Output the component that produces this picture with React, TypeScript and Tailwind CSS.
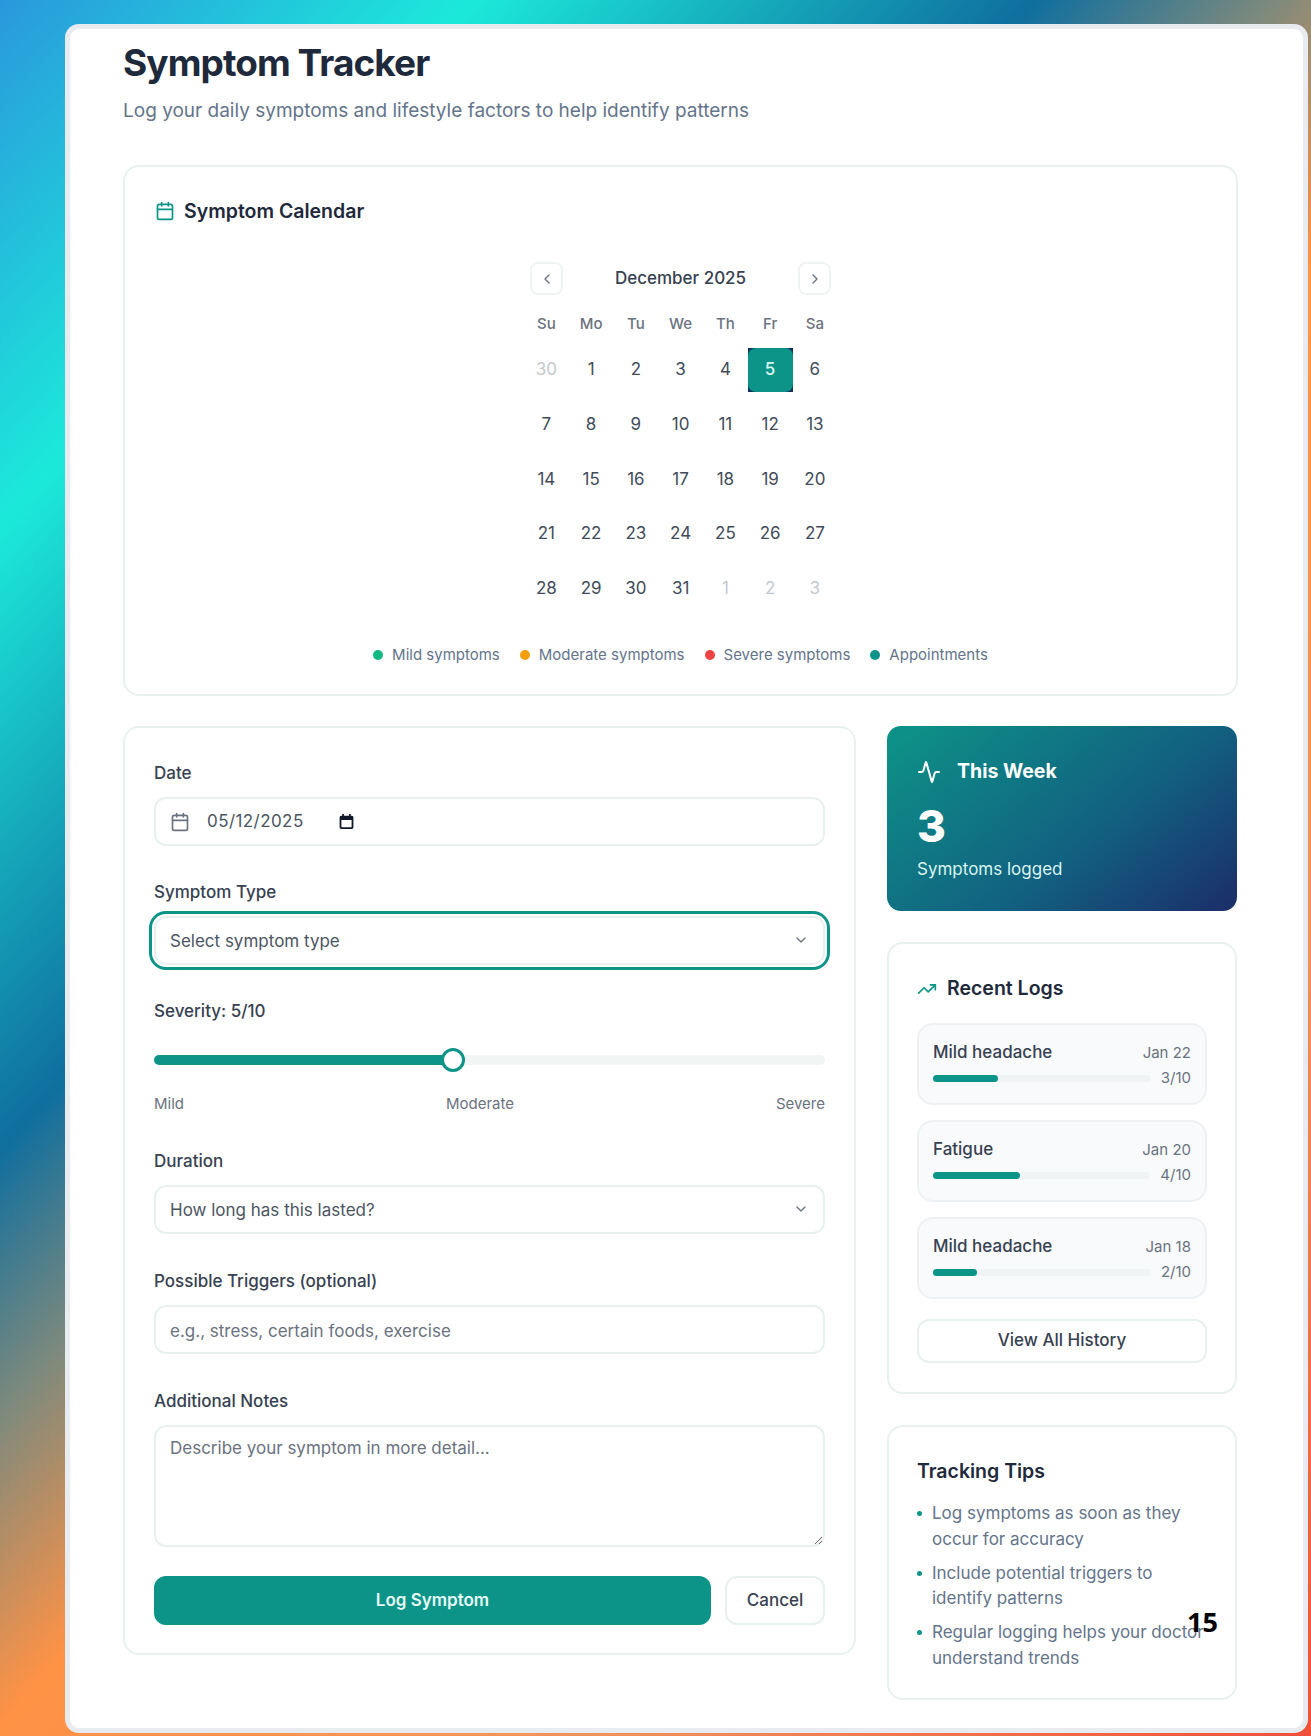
import React from 'react';
import { Activity, Calendar, ChevronDown, ChevronLeft, ChevronRight, TrendingUp } from 'lucide-react';

const weekDays = ['Su', 'Mo', 'Tu', 'We', 'Th', 'Fr', 'Sa'];

const days = [
  30, 1, 2, 3, 4, 5, 6,
  7, 8, 9, 10, 11, 12, 13,
  14, 15, 16, 17, 18, 19, 20,
  21, 22, 23, 24, 25, 26, 27,
  28, 29, 30, 31, 1, 2, 3,
];

const legend = [
  { label: 'Mild symptoms', dot: 'bg-[#10b981]' },
  { label: 'Moderate symptoms', dot: 'bg-[#f59e0b]' },
  { label: 'Severe symptoms', dot: 'bg-[#ef4444]' },
  { label: 'Appointments', dot: 'bg-[#0d9488]' },
];

const logs = [
  { name: 'Mild headache', date: 'Jan 22', value: '3/10', fill: 'w-[30%]' },
  { name: 'Fatigue', date: 'Jan 20', value: '4/10', fill: 'w-[40%]' },
  { name: 'Mild headache', date: 'Jan 18', value: '2/10', fill: 'w-[20%]' },
];

const tips = [
  'Log symptoms as soon as they occur for accuracy',
  'Include potential triggers to identify patterns',
  'Regular logging helps your doctor understand trends',
];

const Label: React.FC<{ children: React.ReactNode }> = ({ children }) => (
  <label className="block h-6 mb-3 text-[17px] leading-6 font-medium text-[#374151]">{children}</label>
);

const inputClass =
  'block w-full h-[49px] px-[14px] pt-[2px] rounded-xl border-2 border-[#e9f0f0] bg-white text-[17px] text-[#4b5563] placeholder:text-[#6b7280] outline-none';

const App: React.FC = () => {
  return (
    <div className="relative w-[1311px] h-[1736px] overflow-hidden pt-6 pl-[65px] font-['Inter',sans-serif] bg-[linear-gradient(132deg,#2a98dc_0%,#1ce9da_16.5%,#0f6f9f_36%,#7f8a7c_44.5%,#ff9245_54%,#f0935a_75%,#f0503a_100%)]">
      <div className="w-[1243px] h-[1709px] pl-[53px] pr-[65px] pt-4 rounded-[14px] border-[5px] border-[#e8ebef] bg-white">
        <h1 className="text-[37px] leading-9 font-bold tracking-tight text-[#1e293b]">Symptom Tracker</h1>
        <p className="mt-[16px] text-[19px] leading-7 text-[#64748b]">
          Log your daily symptoms and lifestyle factors to help identify patterns
        </p>

        <section className="mt-[40px] h-[531px] px-[30px] pt-[30px] rounded-2xl border-2 border-[#e9f0f0]">
          <div className="flex items-center gap-[9px] h-7">
            <Calendar size={20} className="text-[#0d9488]" />
            <h2 className="text-[19.5px] leading-7 font-semibold text-[#1e293b]">Symptom Calendar</h2>
          </div>

          <div className="mt-[37px] w-[313px] mx-auto">
            <div className="flex items-center justify-between px-[6px] h-[33px]">
              <button className="flex items-center justify-center w-[33px] h-[33px] rounded-lg border-2 border-[#f0f3f4] text-[#6b7280]">
                <ChevronLeft size={16} />
              </button>
              <span className="text-[17px] font-medium text-[#374151]">December 2025</span>
              <button className="flex items-center justify-center w-[33px] h-[33px] rounded-lg border-2 border-[#f0f3f4] text-[#6b7280]">
                <ChevronRight size={16} />
              </button>
            </div>

            <div className="mt-[19px] grid grid-cols-[repeat(7,44.75px)]">
              {weekDays.map((d) => (
                <div key={d} className="h-5 text-center text-[15px] leading-5 font-medium text-[#6b7280]">
                  {d}
                </div>
              ))}
            </div>

            <div className="mt-[14px] grid grid-cols-[repeat(7,44.75px)] gap-y-[10.7px]">
              {days.map((d, i) => {
                const muted = i === 0 || i > 31;
                if (i === 5) {
                  return (
                    <div key={i} className="h-11 bg-[#12305c]">
                      <div className="flex items-center justify-center h-full rounded-lg bg-[#0d9488] text-[17px] font-medium text-[#d6fbf3]">
                        {d}
                      </div>
                    </div>
                  );
                }
                return (
                  <div
                    key={i}
                    className={`flex items-center justify-center h-11 text-[17px] ${muted ? 'text-[#c4c9cf]' : 'text-[#414b5a]'}`}
                  >
                    {d}
                  </div>
                );
              })}
            </div>
          </div>

          <div className="mt-[34px] flex items-center justify-center gap-[20px]">
            {legend.map((item) => (
              <div key={item.label} className="flex items-center gap-[9px]">
                <span className={`w-[10px] h-[10px] rounded-full ${item.dot}`} />
                <span className="text-[15px] leading-5 text-[#64748b]">{item.label}</span>
              </div>
            ))}
          </div>
        </section>

        <div className="mt-[30px] flex items-start gap-[31px]">
          <section className="w-[733px] h-[929px] px-[29px] pt-[33px] rounded-2xl border-2 border-[#e9f0f0]">
            <Label>Date</Label>
            <div className="flex items-center h-[49px] px-[14px] rounded-xl border-2 border-[#e9f0f0]">
              <Calendar size={20} className="text-[#6b7280]" />
              <span className="ml-[17px] text-[17px] tracking-wide text-[#4b5563]">05/12/2025</span>
              <svg viewBox="0 0 16 16" className="ml-[34px] w-[17px] h-[17px] text-[#111827]" fill="currentColor">
                <path d="M4 1h1.6v1.5h4.8V1H12v1.5h1A1.5 1.5 0 0 1 14.5 4v9.5A1.5 1.5 0 0 1 13 15H3a1.5 1.5 0 0 1-1.5-1.5V4A1.5 1.5 0 0 1 3 2.5h1V1zM3.2 6.5v6.8h9.6V6.5H3.2z" />
              </svg>
            </div>

            <div className="mt-[34px]">
              <Label>Symptom Type</Label>
              <div className="relative">
                <select className={`${inputClass} appearance-none ring-[3px] ring-[#0d9488] ring-offset-2`} defaultValue="">
                  <option value="">Select symptom type</option>
                </select>
                <ChevronDown size={16} className="absolute right-4 top-4 text-[#6b7280]" />
              </div>
            </div>

            <div className="mt-[34px]">
              <div className="h-6 text-[17px] leading-6 font-medium text-[#374151]">Severity: 5/10</div>
              <div className="relative mt-8 h-[10px] rounded-full bg-[#f1f5f4]">
                <div className="h-full w-[44%] rounded-full bg-[#0d9488]" />
                <div className="absolute left-[287px] top-[-7px] w-6 h-6 rounded-full border-[3px] border-[#0d9488] bg-white" />
              </div>
              <div className="mt-[29px] flex justify-between text-[15px] leading-5 text-[#6b7280]">
                <span>Mild</span>
                <span>Moderate</span>
                <span>Severe</span>
              </div>
            </div>

            <div className="mt-[35px]">
              <Label>Duration</Label>
              <div className="relative">
                <select className={`${inputClass} appearance-none`} defaultValue="">
                  <option value="">How long has this lasted?</option>
                </select>
                <ChevronDown size={16} className="absolute right-4 top-4 text-[#6b7280]" />
              </div>
            </div>

            <div className="mt-[35px]">
              <Label>Possible Triggers (optional)</Label>
              <input className={inputClass} placeholder="e.g., stress, certain foods, exercise" />
            </div>

            <div className="mt-[35px]">
              <Label>Additional Notes</Label>
              <textarea
                className="block w-full h-[122px] px-[14px] py-[9px] rounded-xl border-2 border-[#e9f0f0] text-[17px] text-[#4b5563] placeholder:text-[#6b7280] outline-none"
                placeholder="Describe your symptom in more detail..."
              />
            </div>

            <div className="mt-[29px] flex gap-[14px]">
              <button className="flex-1 h-[49px] rounded-xl bg-[#0d9488] text-[17px] font-semibold text-[#e6fbf6]">
                Log Symptom
              </button>
              <button className="w-[100px] h-[49px] rounded-xl border-2 border-[#e9f0f0] bg-white text-[17px] font-medium text-[#374151]">
                Cancel
              </button>
            </div>
          </section>

          <aside className="w-[350px] flex flex-col gap-[31px]">
            <div className="h-[185px] px-[30px] pt-[32px] rounded-[14px] text-white bg-[linear-gradient(140deg,#0d9488_0%,#125f80_60%,#1c2d68_100%)]">
              <div className="flex items-center gap-4 h-7">
                <Activity size={24} />
                <span className="text-[19.5px] font-bold">This Week</span>
              </div>
              <div className="mt-[14px] text-[44px] leading-[52px] font-extrabold">3</div>
              <div className="mt-[5px] text-[17px] text-[#d9f5f0]">Symptoms logged</div>
            </div>

            <div className="h-[452px] px-[28px] pt-[31px] rounded-2xl border-2 border-[#e9f0f0]">
              <div className="flex items-center gap-[10px] h-7">
                <TrendingUp size={20} className="text-[#0d9488]" />
                <h3 className="text-[19.5px] font-semibold text-[#1e293b]">Recent Logs</h3>
              </div>
              <div className="mt-[20px] flex flex-col gap-[15px]">
                {logs.map((log, i) => (
                  <div key={i} className="h-[82px] px-[14px] pt-[16px] rounded-2xl border-2 border-[#eef1f3] bg-[#f8fafb]">
                    <div className="flex items-center justify-between h-6">
                      <span className="text-[17px] font-medium text-[#374151]">{log.name}</span>
                      <span className="text-[15px] text-[#6b7280]">{log.date}</span>
                    </div>
                    <div className="mt-[3px] flex items-center gap-[10px]">
                      <div className="flex-1 h-[7px] rounded-full bg-[#f0f4f4]">
                        <div className={`h-full rounded-full bg-[#0d9488] ${log.fill}`} />
                      </div>
                      <span className="text-[15px] leading-5 text-[#6b7280]">{log.value}</span>
                    </div>
                  </div>
                ))}
              </div>
              <button className="mt-[20px] w-full h-[44px] rounded-xl border-2 border-[#e9f0f0] bg-white text-[17px] font-medium text-[#374151]">
                View All History
              </button>
            </div>

            <div className="h-[275px] px-[28px] pt-[30px] rounded-2xl border-2 border-[#e9f0f0]">
              <h3 className="h-7 text-[19.5px] leading-7 font-semibold text-[#1e293b]">Tracking Tips</h3>
              <ul className="mt-[16px] flex flex-col gap-[8.5px]">
                {tips.map((tip) => (
                  <li key={tip} className="flex gap-[10px] text-[17px] leading-[25.5px] text-[#64748b]">
                    <span className="mt-[10px] w-[5px] h-[5px] shrink-0 rounded-full bg-[#0d9488]" />
                    <span>{tip}</span>
                  </li>
                ))}
              </ul>
            </div>
          </aside>
        </div>
      </div>

      <span className="absolute left-[1187px] top-[1604px] text-[27px] leading-9 font-bold text-black font-['Open_Sans',sans-serif]">
        15
      </span>
    </div>
  );
};

export default App;
